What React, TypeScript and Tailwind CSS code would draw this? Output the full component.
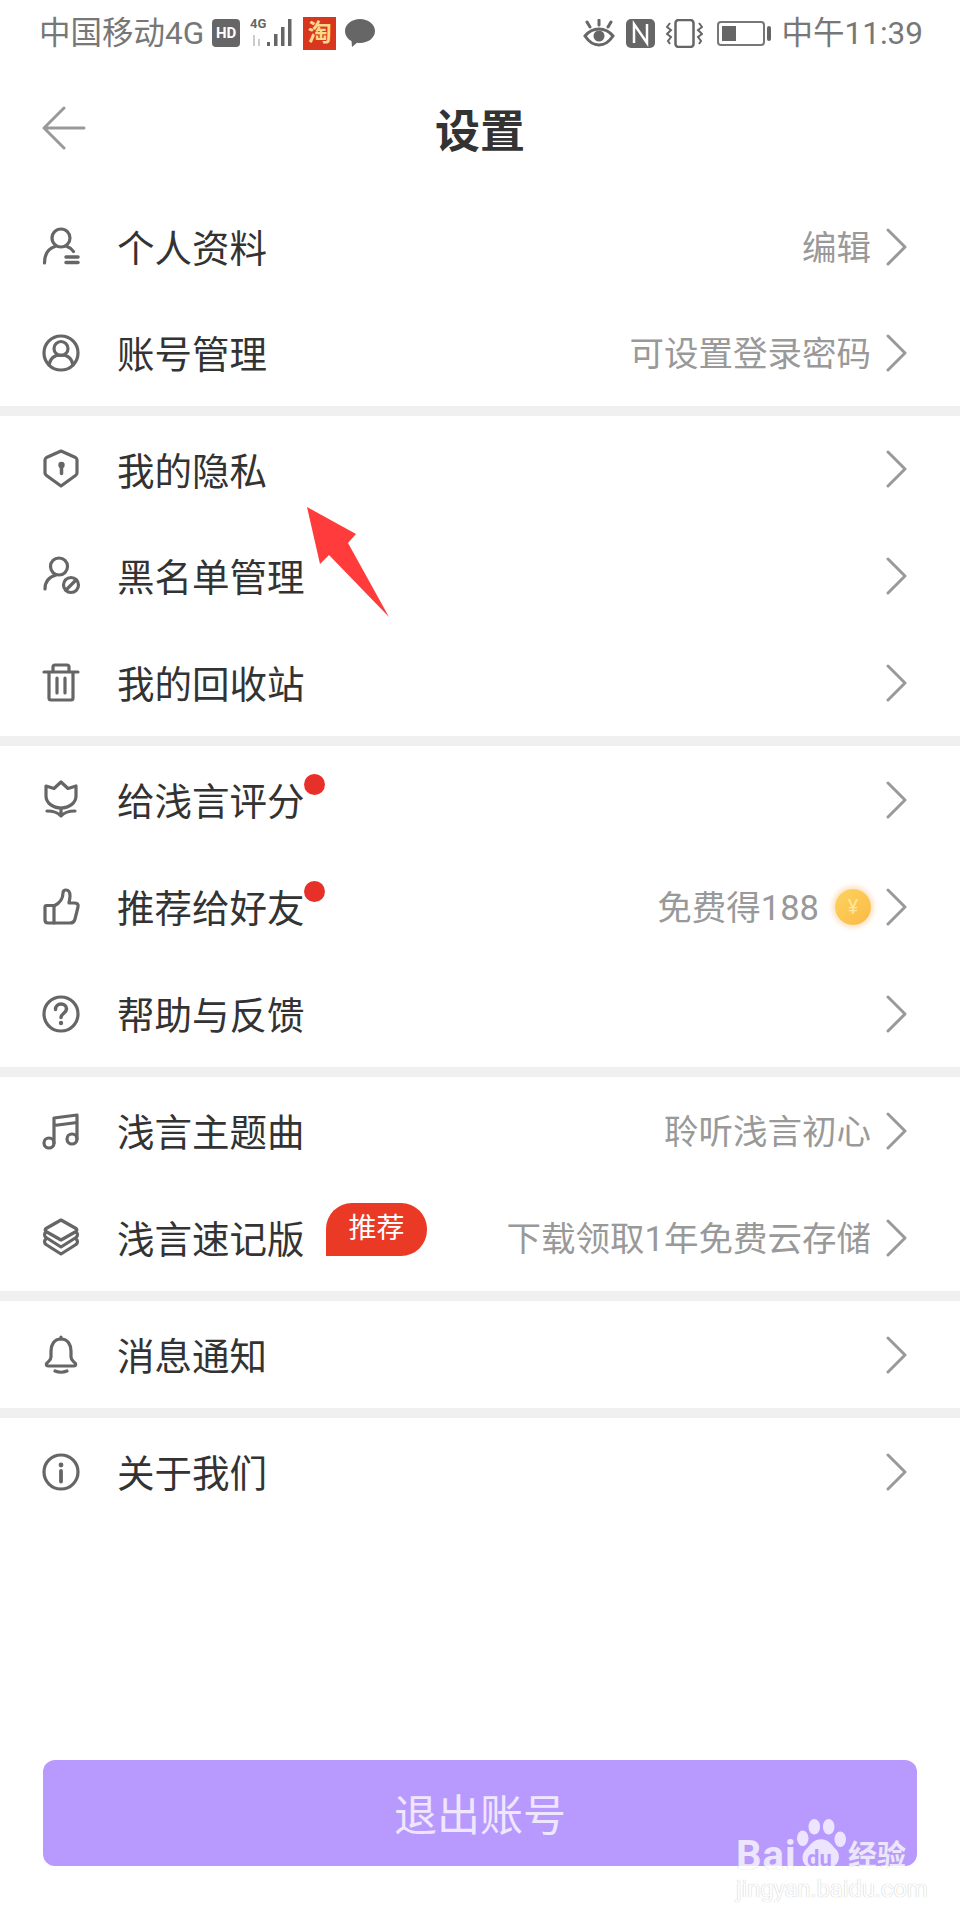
import type { ReactNode } from "react";

const stroke = {
  fill: "none",
  stroke: "#666",
  strokeWidth: 3.2,
  strokeLinecap: "round" as const,
  strokeLinejoin: "round" as const,
};

function Icon({ children }: { children: ReactNode }) {
  return (
    <svg width="40" height="40" viewBox="0 0 40 40" {...stroke}>
      {children}
    </svg>
  );
}

const ICONS: Record<string, ReactNode> = {
  profile: (
    <Icon>
      <circle cx="20" cy="11" r="9" />
      <path d="M3.500 36c0-9 4-14.500 10.500-16.500M26 19.500c3 1 5 2.500 6.500 5" />
      <path d="M25 30h12M25 35.500h12" strokeWidth="3.500" />
    </Icon>
  ),
  account: (
    <Icon>
      <circle cx="20" cy="20" r="17" />
      <circle cx="20" cy="15.500" r="7" />
      <path d="M8 32c1-6 5-10 12-10s11 4 12 10" />
    </Icon>
  ),
  shield: (
    <Icon>
      <path d="M20 2l14.500 6.500q1.500 1 1.500 2.500v13q0 1.500-1.500 2.500L20 37 5.500 26.500Q4 25.500 4 24V11q0-1.500 1.500-2.500z" />
      <circle cx="20.500" cy="16" r="3.200" fill="#666" stroke="none" />
      <path d="M20.500 17v7.500" strokeWidth="3.500" />
    </Icon>
  ),
  blocked: (
    <Icon>
      <circle cx="18" cy="10.500" r="8.500" />
      <path d="M4 33c0-7 4-12 11-14" />
      <circle cx="30" cy="29" r="7.500" />
      <path d="M25 34l10-10" />
    </Icon>
  ),
  trash: (
    <Icon>
      <path d="M3 9h34" />
      <path d="M12 8V4q0-2 2-2h12q2 0 2 2v4" />
      <path d="M8 10v25q0 2 2 2h20q2 0 2-2V10" />
      <path d="M16 15v15M24 15v15" />
    </Icon>
  ),
  flower: (
    <Icon>
      <path d="M5 6l8 2.500L20 2l7 6.500L35 6v10c0 7-7 12-15 12S5 23 5 16z" />
      <path d="M20 28v8M6 31c6 0 11 1.500 14 5 3-3.500 8-5 14-5" />
    </Icon>
  ),
  thumb: (
    <Icon>
      <path d="M4 20q0-1.500 1.500-1.500H13V36H7q-3 0-3-3z" />
      <path d="M13 19c6-3 9-8 9-13 0-2 1-3 3-3 3 0 4 3 4 6s-1 6-1 7h5q5 0 4 4l-3 12q-1 4-5 4H13" />
    </Icon>
  ),
  help: (
    <Icon>
      <circle cx="20" cy="20" r="17" />
      <path d="M14.500 15.500c0-3.500 2.500-5.500 5.500-5.500s5.500 2 5.500 5c0 4-5.500 4.500-5.500 8.500" strokeWidth="3.500" />
      <circle cx="20" cy="29" r="2.200" fill="#666" stroke="none" />
    </Icon>
  ),
  music: (
    <Icon>
      <circle cx="8" cy="32" r="5" />
      <circle cx="31" cy="28" r="5" />
      <path d="M13 32V7l23-3v24M13 14.500l23-3" />
    </Icon>
  ),
  layers: (
    <Icon>
      <path d="M20 2l15 8.500q1.500 1.500 0 3L20 22 5 13.500q-1.500-1.500 0-3z" />
      <path d="M5 14q-3 2.500 0 5.500L20 29l15-9.500q3-3 0-5.500" />
      <path d="M5 21q-3 2.500 0 5.500L20 36l15-9.500q3-3 0-5.500" />
    </Icon>
  ),
  bell: (
    <Icon>
      <path d="M20 4c-7 0-10 6-10 12v6c0 3-2 4-4 6-1 1-1 3 1 3h26c2 0 2-2 1-3-2-2-4-3-4-6v-6c0-6-3-12-10-12z" />
      <path d="M20 2v2M14 36q6 2.500 12 0" />
    </Icon>
  ),
  info: (
    <Icon>
      <circle cx="20" cy="20" r="17" />
      <circle cx="20" cy="13" r="2.400" fill="#666" stroke="none" />
      <path d="M20 19v10.500" strokeWidth="3.800" />
    </Icon>
  ),
};

function Chevron() {
  return (
    <svg width="21" height="38" viewBox="0 0 21 38" fill="none" stroke="#999" strokeWidth="3" strokeLinecap="round" strokeLinejoin="round">
      <path d="M2 2l17 17L2 36" />
    </svg>
  );
}

function Coin() {
  return (
    <div className="w-[36px] h-[36px] rounded-full bg-gradient-to-br from-[#fdd35f] to-[#fbb945] shadow-[0_0_5px_3px_#fbe3c8] flex items-center justify-center text-[20px] leading-none text-[#fde79a]">
      ¥
    </div>
  );
}

type RowData = {
  icon: string;
  label: string;
  right?: string;
  dot?: boolean;
  badge?: boolean;
  coin?: boolean;
};

const GROUPS: { h: string; rows: RowData[] }[] = [
  {
    h: "h-[212px]",
    rows: [
      { icon: "profile", label: "个人资料", right: "编辑" },
      { icon: "account", label: "账号管理", right: "可设置登录密码" },
    ],
  },
  {
    h: "h-[320px]",
    rows: [
      { icon: "shield", label: "我的隐私" },
      { icon: "blocked", label: "黑名单管理" },
      { icon: "trash", label: "我的回收站" },
    ],
  },
  {
    h: "h-[321px]",
    rows: [
      { icon: "flower", label: "给浅言评分", dot: true },
      { icon: "thumb", label: "推荐给好友", dot: true, right: "免费得188", coin: true },
      { icon: "help", label: "帮助与反馈" },
    ],
  },
  {
    h: "h-[214px]",
    rows: [
      { icon: "music", label: "浅言主题曲", right: "聆听浅言初心" },
      { icon: "layers", label: "浅言速记版", badge: true, right: "下载领取1年免费云存储" },
    ],
  },
  { h: "h-[107px]", rows: [{ icon: "bell", label: "消息通知" }] },
  { h: "h-[107px]", rows: [{ icon: "info", label: "关于我们" }] },
];

function Row({ row }: { row: RowData }) {
  return (
    <div className="flex-1 flex items-center pl-[41px] pr-[53px]">
      <div className="w-[76px] shrink-0">{ICONS[row.icon]}</div>
      <div className="relative mt-[6px] text-[37.500px] leading-none text-[#333]">
        {row.label}
        {row.dot && (
          <span className="absolute left-[187px] top-[-10px] w-[21px] h-[21px] rounded-full bg-[#e8302a]" />
        )}
        {row.badge && (
          <span className="absolute left-[209px] top-[-19px] w-[101px] h-[53px] rounded-[26px] rounded-bl-none bg-[#ea3a25] text-white text-[28px] flex items-center justify-center">
            推荐
          </span>
        )}
      </div>
      <div className="ml-auto mt-[3px] flex items-center text-[34.500px] leading-none text-[#999]">
        {row.right}
        {row.coin && (
          <div className="ml-[16px] mt-[-3px]">
            <Coin />
          </div>
        )}
      </div>
      <div className="ml-[15px] shrink-0">
        <Chevron />
      </div>
    </div>
  );
}

function StatusLeft() {
  return (
    <div className="flex items-center">
      <span className="mt-[2px]">中国移动4G</span>
      <span className="ml-[8px] w-[28px] h-[28px] rounded-[4px] bg-[#666] text-white text-[15px] font-bold leading-none flex items-center justify-center">
        HD
      </span>
      <svg className="ml-[10px]" width="48" height="32" viewBox="0 0 48 32" fill="#666">
        <text x="0" y="11" fontSize="13" fontWeight="700" fontFamily="Roboto">4G</text>
        <path d="M3 18h2v11H3zM8 22h2v7H8z" fill="#ccc" />
        <rect x="17" y="25" width="3" height="4" />
        <rect x="24" y="17" width="3.500" height="12" />
        <rect x="31" y="10" width="3.500" height="19" />
        <rect x="38" y="2" width="3.500" height="27" />
      </svg>
      <span className="ml-[5px] w-[33px] h-[33px] bg-[#d8361f] text-[#fbd98a] text-[24px] leading-none font-bold flex items-center justify-center">
        淘
      </span>
      <svg className="ml-[9px]" width="30" height="30" viewBox="0 0 30 30" fill="#666">
        <path d="M15 1c8 0 15 5 15 12s-7 12-15 12c-1 0-2 0-3-.300L7 29l-.500-6C2.500 21 0 17 0 13 0 6 7 1 15 1z" />
      </svg>
    </div>
  );
}

function StatusRight() {
  return (
    <div className="flex items-center">
      <svg width="32" height="28" viewBox="0 0 32 28" fill="none" stroke="#666" strokeWidth="3" strokeLinecap="round">
        <path d="M2 17c4-5 8-7 14-7s10 2 14 7c-4 6-8 9-14 9s-10-3-14-9z" />
        <circle cx="16" cy="17" r="5.500" fill="#666" stroke="none" />
        <path d="M4 3l3 5M16 1v5M28 3l-3 5" />
      </svg>
      <svg className="ml-[11px]" width="29" height="29" viewBox="0 0 29 29">
        <rect width="29" height="29" rx="5" fill="#666" />
        <path d="M8 24V5l13 19V5" fill="none" stroke="#fff" strokeWidth="2.500" />
      </svg>
      <svg className="ml-[11px]" width="37" height="29" viewBox="0 0 37 29" fill="none" stroke="#666" strokeWidth="2">
        <rect x="9.500" y="1" width="18" height="27" rx="3" strokeWidth="2.500" />
        <path d="M4 4L1 8l4 3-4 4 4 3-3 4 2 3M33 4l3 4-4 3 4 4-4 3 3 4-2 3" />
      </svg>
      <div className="ml-[14px] flex items-center">
        <div className="w-[48px] h-[25px] rounded-[4px] border-2 border-[#777] p-[3px]">
          <div className="w-[14px] h-full bg-[#666]" />
        </div>
        <div className="ml-[2px] w-[4px] h-[15px] rounded-[2px] bg-[#666]" />
      </div>
      <span className="ml-[11px] mt-[2px]">中午11:39</span>
    </div>
  );
}

function Watermark() {
  return (
    <div className="absolute left-[736px] top-[1818px] w-[175px] h-[84px] text-white [text-shadow:0_0_1px_#aaa] pointer-events-none">
      <svg className="absolute left-[60px] top-0 opacity-75" width="50" height="54" viewBox="0 0 52 54" fill="#fff">
        <ellipse cx="7" cy="20" rx="6" ry="8" />
        <ellipse cx="19" cy="8" rx="6" ry="8" />
        <ellipse cx="34" cy="8" rx="6" ry="8" />
        <ellipse cx="46" cy="21" rx="6" ry="8" />
        <path d="M26 21c8 0 11 6 16 11 6 7 1 20-9 18-5-1-10-1-15 0C8 52 3 40 10 32c5-5 8-11 16-11z" />
      </svg>
      <span className="absolute left-0 top-[18px] text-[40px] tracking-[1px] leading-[40px] font-bold opacity-75">Bai</span>
      <span className="absolute left-[71px] top-[30px] text-[22px] leading-[22px] font-bold text-[#b89aff] [text-shadow:none]">du</span>
      <span className="absolute left-[112px] top-[24px] text-[29px] leading-[29px] font-bold opacity-75">经验</span>
      <span className="absolute left-0 top-[59px] text-[24px] leading-[24px] tracking-[-0.200px] whitespace-nowrap">jingyan.baidu.com</span>
    </div>
  );
}

export default function App() {
  return (
    <div className="relative w-[960px] h-[1920px] bg-white flex flex-col overflow-hidden font-['Roboto','Noto_Sans_CJK_SC',sans-serif]">
      <div className="h-[66px] flex items-center justify-between pl-[39px] pr-[37px] text-[31.500px] leading-none text-[#777]">
        <StatusLeft />
        <StatusRight />
      </div>

      <div className="h-[128px] relative flex items-center justify-center">
        <svg className="absolute left-[42px] top-[40px]" width="44" height="44" viewBox="0 0 44 44" fill="none" stroke="#999" strokeWidth="3" strokeLinecap="round" strokeLinejoin="round">
          <path d="M22 2L2 22l20 20M2 22h40" />
        </svg>
        <h1 className="mt-[5px] text-[45px] leading-none font-bold text-[#333]">设置</h1>
      </div>

      {GROUPS.map((group, i) => (
        <div key={i} className={`${group.h} flex flex-col ${i > 0 ? "border-t-[10px] border-[#f0f0f0] box-content" : ""}`}>
          {group.rows.map((row) => (
            <Row key={row.label} row={row} />
          ))}
        </div>
      ))}

      <div className="flex-1" />

      <div className="mx-[43px] mb-[54px] h-[106px] rounded-[12px] bg-[#b89aff] flex items-center justify-center pt-[6px] text-[43px] leading-none text-[#efe6ff]">
        退出账号
      </div>

      <svg className="absolute left-[300px] top-[500px]" width="95" height="125" viewBox="0 0 95 125" fill="#ff3b3b">
        <path d="M7 7l49 27-8 9 41 74-60-62-9 9z" />
      </svg>

      <Watermark />
    </div>
  );
}
